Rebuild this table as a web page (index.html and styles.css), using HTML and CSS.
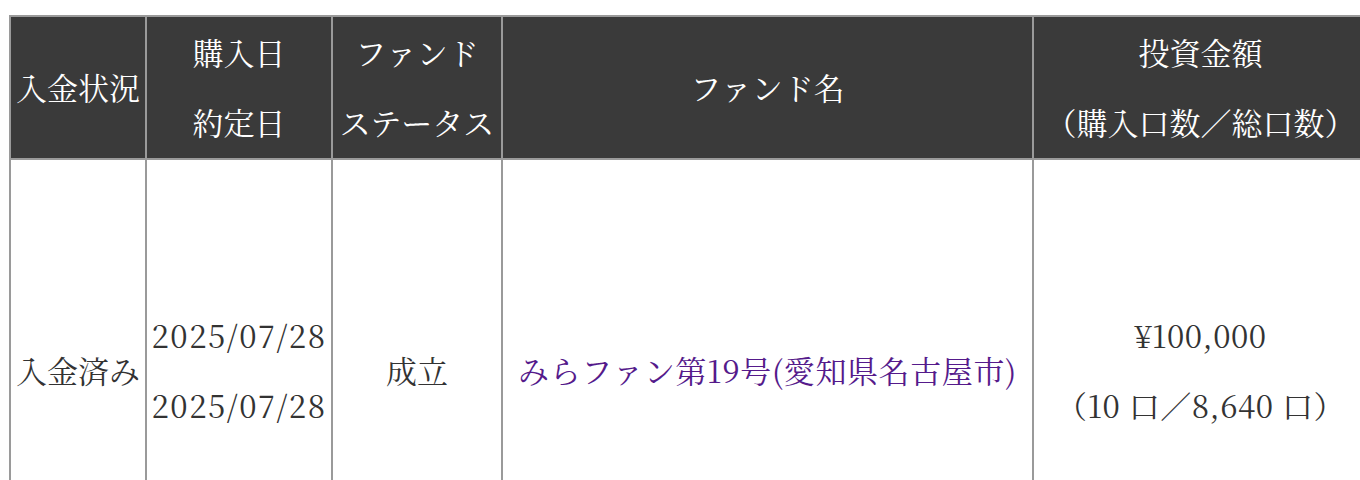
FILE: index.html
```html
<!DOCTYPE html>
<html lang="ja">
<head>
<meta charset="utf-8">
<title>投資履歴</title>
<link rel="stylesheet" href="styles.css">
</head>
<body>
<table class="history">
  <colgroup>
    <col class="c-status">
    <col class="c-date">
    <col class="c-fstatus">
    <col class="c-name">
    <col class="c-amount">
  </colgroup>
  <thead>
    <tr>
      <th>入金状況</th>
      <th>購入日<br>約定日</th>
      <th>ファンド<br>ステータス</th>
      <th>ファンド名</th>
      <th>投資金額<br>（購入口数／総口数）</th>
    </tr>
  </thead>
  <tbody>
    <tr class="row">
      <td>入金済み</td>
      <td class="dates">2025/07/28<br>2025/07/28</td>
      <td>成立</td>
      <td><a class="fund-link" href="#">みらファン第19号(愛知県名古屋市)</a></td>
      <td class="amount">¥100,000<br>（10 口／8,640 口）</td>
    </tr>
  </tbody>
</table>
</body>
</html>
```
FILE: styles.css
```css
html, body {
  overflow: hidden;
}
body {
  margin: 0;
  padding: 15px 0 0 9px;
  background: #ffffff;
  font-family: "Noto Serif CJK JP", "DejaVu Serif", "Noto Sans CJK JP", serif;
  font-size: 31px;
  color: #333333;
}
.history {
  border-collapse: collapse;
  table-layout: fixed;
  width: 1358px;
}
.c-status { width: 136px; }
.c-date { width: 186px; }
.c-fstatus { width: 170px; }
.c-name { width: 531px; }
.c-amount { width: 335px; }

.history th,
.history td {
  border: 2px solid #9a9a9a;
  padding: 0 3px;
  text-align: center;
  vertical-align: middle;
  line-height: 70px;
  white-space: nowrap;
  overflow: hidden;
}
.history th {
  background: #3a3a3a;
  color: #ffffff;
  font-weight: normal;
  padding-bottom: 1px;
}
.history .row td {
  height: 420px;
  padding-bottom: 4px;
  background: #ffffff;
}
.history .dates {
  letter-spacing: 1.5px;
}
.history .amount {
  letter-spacing: 0.5px;
}
.fund-link {
  color: #551a8b;
  text-decoration: none;
  letter-spacing: 0.6px;
}
```
